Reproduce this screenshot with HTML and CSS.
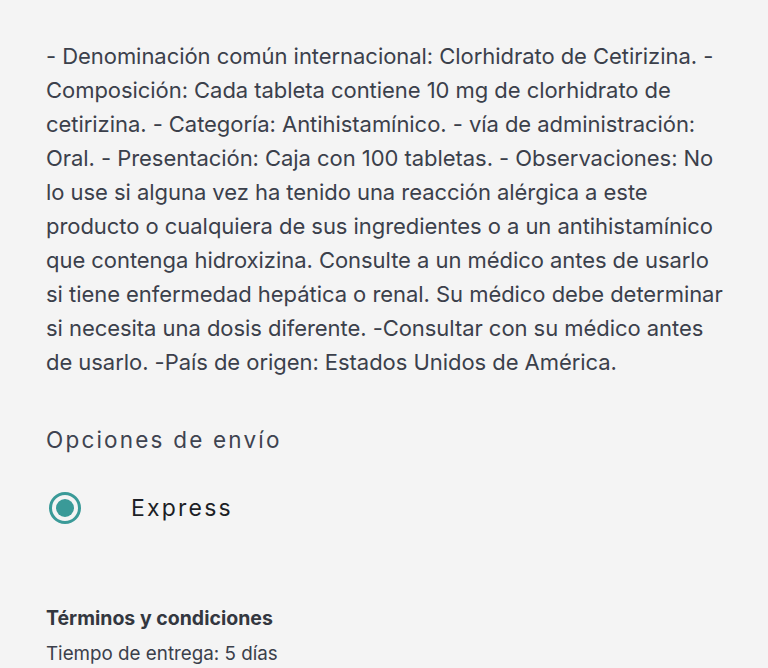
FILE: index.html
```html
<!DOCTYPE html>
<html lang="es">
<head>
<meta charset="utf-8">
<link rel="stylesheet" href="styles.css">
</head>
<body>
<main class="page">
  <p class="desc">- Denominación común internacional: Clorhidrato de Cetirizina. -<br>Composición: Cada tableta contiene 10 mg de clorhidrato de<br>cetirizina. - Categoría: Antihistamínico. - vía de administración:<br>Oral. - Presentación: Caja con 100 tabletas. - Observaciones: No<br>lo use si alguna vez ha tenido una reacción alérgica a este<br>producto o cualquiera de sus ingredientes o a un antihistamínico<br>que contenga hidroxizina. Consulte a un médico antes de usarlo<br>si tiene enfermedad hepática o renal. Su médico debe determinar<br>si necesita una dosis diferente. -Consultar con su médico antes<br>de usarlo. -País de origen: Estados Unidos de América.</p>
  <h2 class="section-title">Opciones de envío</h2>
  <label class="option">
    <span class="radio"><span class="radio-dot"></span></span>
    <span class="option-label">Express</span>
  </label>
  <h3 class="terms-title">Términos y condiciones</h3>
  <p class="terms-text">Tiempo de entrega: 5 días</p>
</main>
</body>
</html>
```
FILE: styles.css
```css
html, body {
  margin: 0;
  padding: 0;
  background: #f4f4f4;
}
body {
  font-family: Inter, "Noto Sans", sans-serif;
  color: #3b404b;
}
.page {
  padding: 39px 0 0 46px;
}
.desc {
  margin: 0;
  font-size: 22px;
  line-height: 34px;
  white-space: nowrap;
  letter-spacing: -0.05px;
}
.section-title {
  margin: 46px 0 0;
  font-size: 22.5px;
  font-weight: 400;
  line-height: 30px;
  letter-spacing: 2.2px;
  color: #3e4350;
}
.option {
  display: flex;
  align-items: center;
  margin-top: 33px;
  height: 40px;
}
.radio {
  width: 26px;
  height: 26px;
  border: 3px solid #3a9a98;
  border-radius: 50%;
  display: flex;
  align-items: center;
  justify-content: center;
  margin-left: 3px;
}
.radio-dot {
  width: 18px;
  height: 18px;
  border-radius: 50%;
  background: #3a9a98;
}
.option-label {
  margin-left: 50px;
  font-size: 23px;
  letter-spacing: 2.2px;
  color: #1c1f26;
}
.terms-title {
  margin: 76px 0 0;
  font-size: 19.5px;
  font-weight: 700;
  line-height: 28px;
  color: #33373f;
}
.terms-text {
  margin: 8px 0 0;
  font-size: 18.8px;
  line-height: 28px;
}
```
